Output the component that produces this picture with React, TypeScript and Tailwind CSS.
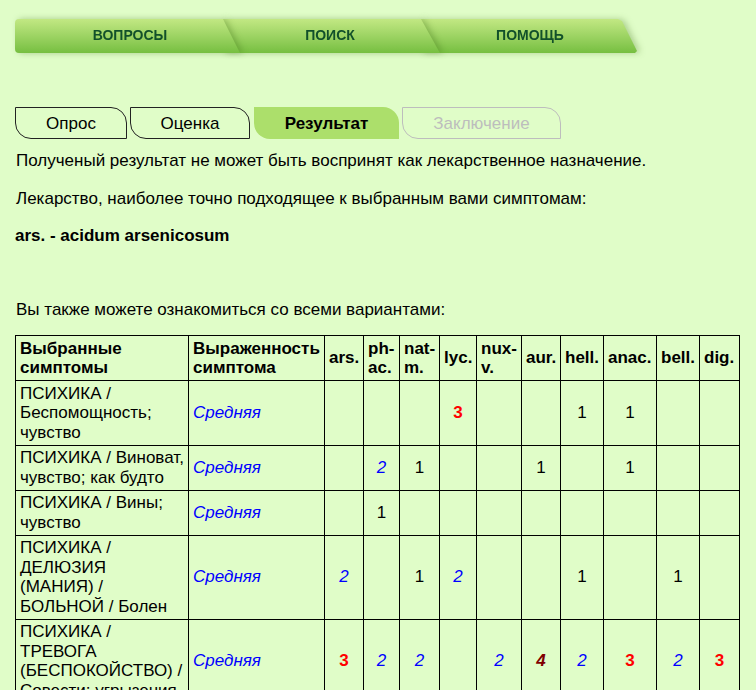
import React from "react";

type Cell = "" | "1" | "2" | "3" | "4";

const rows: { s: string; v: Cell[] }[] = [
  { s: "ПСИХИКА / Беспомощность; чувство", v: ["", "", "", "3", "", "", "1", "1", "", ""] },
  { s: "ПСИХИКА / Виноват, чувство; как будто", v: ["", "2", "1", "", "", "1", "", "1", "", ""] },
  { s: "ПСИХИКА / Вины; чувство", v: ["", "1", "", "", "", "", "", "", "", ""] },
  { s: "ПСИХИКА / ДЕЛЮЗИЯ (МАНИЯ) / БОЛЬНОЙ / Болен", v: ["2", "", "1", "2", "", "", "1", "", "1", ""] },
  {
    s: "ПСИХИКА / ТРЕВОГА (БЕСПОКОЙСТВО) / Совести; угрызения",
    v: ["3", "2", "2", "", "2", "4", "2", "3", "2", "3"],
  },
];

const remedies = ["ars.", "ph-ac.", "nat-m.", "lyc.", "nux-v.", "aur.", "hell.", "anac.", "bell.", "dig."];

function Num({ v }: { v: Cell }) {
  if (v === "3") return <span className="font-bold text-[#ff0000]">3</span>;
  if (v === "2") return <span className="italic text-[#0000ff]">2</span>;
  if (v === "4") return <span className="font-bold italic text-[#800000]">4</span>;
  if (v === "1") return <span className="text-black">1</span>;
  return null;
}

export default function App() {
  return (
    <div className="min-h-[690px] w-[756px] overflow-hidden bg-[#e0fdc8] font-['Liberation_Sans',Arial,sans-serif] text-[17px] leading-[19.5px] text-black">
      {/* top navigation */}
      <div className="flex pl-[15px] pt-[19px]">
        <div className="flex h-[34px]">
          <div className="relative z-30 [filter:drop-shadow(3px_0_3px_rgba(60,110,20,0.35))]">
            <div className="flex h-[34px] w-[225px] items-center justify-center rounded-l-[4px] bg-gradient-to-b from-[#c2e883] to-[#76bf40] pl-[5px] text-[14px] font-bold text-[#12502a] [clip-path:polygon(0_0,calc(100%_-_17px)_0,100%_100%,0_100%)]">
              ВОПРОСЫ
            </div>
          </div>
          <div className="relative z-20 -ml-[17px] [filter:drop-shadow(3px_0_3px_rgba(60,110,20,0.35))]">
            <div className="flex h-[34px] w-[217px] items-center justify-center bg-gradient-to-b from-[#c2e883] to-[#76bf40] pr-[3px] text-[14px] font-bold text-[#12502a] [clip-path:polygon(0_0,calc(100%_-_19px)_0,100%_100%,0_100%)]">
              ПОИСК
            </div>
          </div>
          <div className="relative z-10 -ml-[19px] [filter:drop-shadow(3px_0_3px_rgba(60,110,20,0.3))]">
            <div className="flex h-[34px] w-[216px] items-center justify-center bg-gradient-to-b from-[#c2e883] to-[#76bf40] pl-[2px] text-[14px] font-bold text-[#12502a] [clip-path:polygon(0_0,calc(100%_-_19px)_0,calc(100%_-_15px)_2px,100%_calc(100%_-_2px),calc(100%_-_2px)_100%,0_100%)]">
              ПОМОЩЬ
            </div>
          </div>
        </div>
      </div>

      <div className="pl-[15px]">
        {/* step tabs */}
        <div className="mt-[54px] flex h-[32px]">
          <div className="flex h-[32px] w-[112px] items-center justify-center rounded-bl-[16px] rounded-tr-[16px] border border-[#222] pt-[2px]">
            Опрос
          </div>
          <div className="ml-[3px] flex h-[32px] w-[120px] items-center justify-center rounded-bl-[16px] rounded-tr-[16px] border border-[#222] pt-[2px]">
            Оценка
          </div>
          <div className="ml-[4px] flex h-[32px] w-[145px] items-center justify-center rounded-bl-[16px] rounded-tr-[16px] bg-[#acdf6b] pt-[2px] font-bold">
            Результат
          </div>
          <div className="ml-[3px] flex h-[32px] w-[159px] items-center justify-center rounded-bl-[16px] rounded-tr-[16px] border border-[#bdbdbd] pt-[2px] text-[#bdbdbd]">
            Заключение
          </div>
        </div>

        <p className="mt-[12px] pl-[1px]">Полученый результат не может быть воспринят как лекарственное назначение.</p>
        <p className="mt-[18px] pl-[1px]">Лекарство, наиболее точно подходящее к выбранным вами симптомам:</p>
        <p className="mt-[18px] font-bold">ars. - acidum arsenicosum</p>
        <p className="mt-[54px] pl-[1px]">Вы также можете ознакомиться со всеми вариантами:</p>

        <table className="mt-[16px] w-[725px] table-fixed border-collapse leading-[19.5px]">
          <colgroup>
            <col className="w-[173px]" />
            <col className="w-[136px]" />
            <col className="w-[39px]" />
            <col className="w-[36px]" />
            <col className="w-[40px]" />
            <col className="w-[37px]" />
            <col className="w-[45px]" />
            <col className="w-[39px]" />
            <col className="w-[43px]" />
            <col className="w-[53px]" />
            <col className="w-[43px]" />
            <col className="w-[40px]" />
          </colgroup>
          <thead>
            <tr>
              <th className="border border-black px-[4px] py-[2.5px] text-left align-middle font-bold">Выбранные симптомы</th>
              <th className="border border-black px-[4px] py-[2.5px] text-left align-middle font-bold">Выраженность симптома</th>
              {remedies.map((r) => (
                <th key={r} className="border border-black px-[4px] py-[2.5px] text-left align-middle font-bold">
                  {r}
                </th>
              ))}
            </tr>
          </thead>
          <tbody>
            {rows.map((row) => (
              <tr key={row.s}>
                <td className="border border-black px-[4px] py-[2.5px] align-middle">{row.s}</td>
                <td className="border border-black px-[4px] py-[2.5px] align-middle italic text-[#0000ff]">Средняя</td>
                {row.v.map((v, i) => (
                  <td key={i} className="border border-black px-[2px] py-[2.5px] text-center align-middle">
                    <Num v={v} />
                  </td>
                ))}
              </tr>
            ))}
          </tbody>
        </table>
      </div>
    </div>
  );
}
